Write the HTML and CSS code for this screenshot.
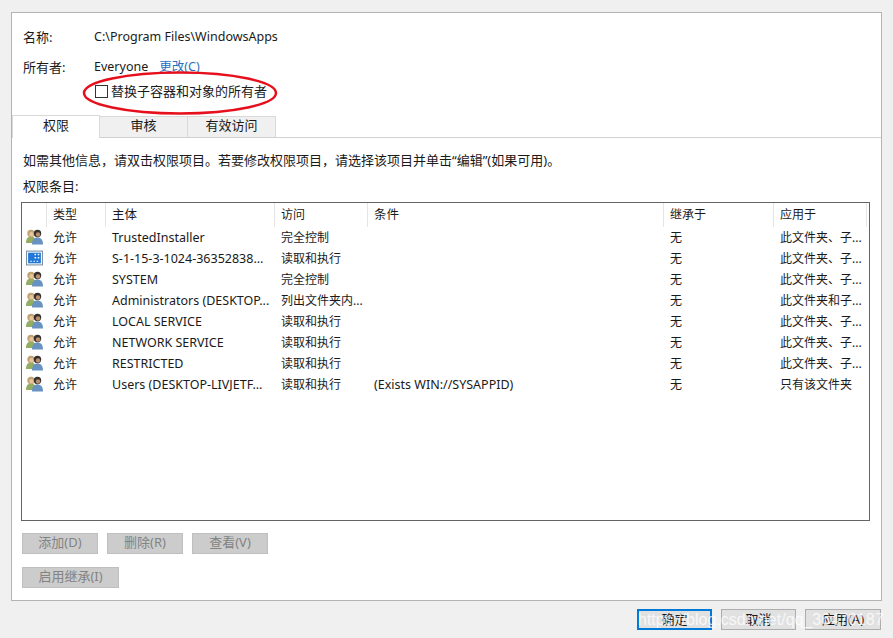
FILE: index.html
```html
<!DOCTYPE html>
<html>
<head>
  <meta charset="utf-8">
  <link rel="stylesheet" href="styles.css">
</head>
<body>
  <svg width="0" height="0" class="defs">
    <symbol id="users" viewBox="0 0 17 16">
      <path d="M0 14c0-4 1.500-6.500 5-6.500s5 2.500 5 6.500z" fill="#93ad63"/>
      <circle cx="5" cy="4.500" r="3.700" fill="#bfa26f"/>
      <circle cx="5.500" cy="5.200" r="2.200" fill="#e6c59c"/>
      <path d="M6 15.500c0-4.500 2-7 5.500-7s5.500 2.500 5.500 7z" fill="#6792c2"/>
      <circle cx="11.500" cy="4.500" r="3.700" fill="#35302e"/>
      <circle cx="12" cy="5.500" r="2.200" fill="#b98f6c"/>
    </symbol>
    <symbol id="package" viewBox="0 0 16 14">
      <rect x="0.500" y="0.500" width="15" height="13" fill="#fff" stroke="#7c8ea3"/>
      <rect x="2" y="2" width="12" height="10" fill="#1f78d8"/>
      <path d="M8 3h1.500v1.500H8zM11 3h1.500v1.500H11zM8 6h1.500v1.500H8zM11 6h1.500v1.500H11zM4 9.500h1.500v1H4zM7 9.500h1.500v1H7zM10 9.500h1.500v1H10z" fill="#fff"/>
    </symbol>
  </svg>

  <div class="panel">
    <div class="info-row name-row">
      <span class="info-label">名称:</span>
      <span>C:\Program Files\WindowsApps</span>
    </div>
    <div class="info-row owner-row">
      <span class="info-label">所有者:</span>
      <span>Everyone</span>
      <a class="change-link">更改(C)</a>
    </div>
    <label class="replace-row"><span class="checkbox"></span>替换子容器和对象的所有者</label>

    <div class="tabs">
      <div class="tab tab-active">权限</div>
      <div class="tab">审核</div>
      <div class="tab">有效访问</div>
    </div>

    <p class="hint">如需其他信息，请双击权限项目。若要修改权限项目，请选择该项目并单击“编辑”(如果可用)。</p>
    <p class="list-title">权限条目:</p>

    <div class="list">
      <div class="list-row list-head">
        <span></span>
        <span>类型</span>
        <span>主体</span>
        <span>访问</span>
        <span>条件</span>
        <span>继承于</span>
        <span>应用于</span>
      </div>
      <div class="list-row"><svg class="icon"><use href="#users"/></svg><span>允许</span><span>TrustedInstaller</span><span>完全控制</span><span></span><span>无</span><span>此文件夹、子...</span></div>
      <div class="list-row"><svg class="icon"><use href="#package"/></svg><span>允许</span><span>S-1-15-3-1024-36352838...</span><span>读取和执行</span><span></span><span>无</span><span>此文件夹、子...</span></div>
      <div class="list-row"><svg class="icon"><use href="#users"/></svg><span>允许</span><span>SYSTEM</span><span>完全控制</span><span></span><span>无</span><span>此文件夹、子...</span></div>
      <div class="list-row"><svg class="icon"><use href="#users"/></svg><span>允许</span><span>Administrators (DESKTOP...</span><span>列出文件夹内...</span><span></span><span>无</span><span>此文件夹和子...</span></div>
      <div class="list-row"><svg class="icon"><use href="#users"/></svg><span>允许</span><span>LOCAL SERVICE</span><span>读取和执行</span><span></span><span>无</span><span>此文件夹、子...</span></div>
      <div class="list-row"><svg class="icon"><use href="#users"/></svg><span>允许</span><span>NETWORK SERVICE</span><span>读取和执行</span><span></span><span>无</span><span>此文件夹、子...</span></div>
      <div class="list-row"><svg class="icon"><use href="#users"/></svg><span>允许</span><span>RESTRICTED</span><span>读取和执行</span><span></span><span>无</span><span>此文件夹、子...</span></div>
      <div class="list-row"><svg class="icon"><use href="#users"/></svg><span>允许</span><span>Users (DESKTOP-LIVJETF...</span><span>读取和执行</span><span>(Exists WIN://SYSAPPID)</span><span>无</span><span>只有该文件夹</span></div>
    </div>

    <div class="btn-row">
      <button class="btn btn-off">添加(D)</button>
      <button class="btn btn-off">删除(R)</button>
      <button class="btn btn-off">查看(V)</button>
    </div>
    <div class="btn-row inherit-row">
      <button class="btn btn-off btn-wide">启用继承(I)</button>
    </div>
  </div>

  <div class="footer">
    <button class="btn btn-main">确定</button>
    <button class="btn">取消</button>
    <button class="btn btn-apply">应用(A)</button>
  </div>

  <!-- red circle drawn over the screenshot -->
  <svg class="ring" width="200" height="46" viewBox="0 0 200 46">
    <ellipse cx="100" cy="23" rx="96" ry="20.500" fill="none" stroke="#e60f1c" stroke-width="2.500"/>
  </svg>
  <div class="watermark">https://blog.csdn.net/qq_36470187</div>
</body>
</html>
```

FILE: styles.css
```css
* {
  box-sizing: border-box;
}

html, body {
  margin: 0;
  height: 638px;
  overflow: hidden;
}

body {
  position: relative;
  padding: 12px 11px 0;
  background-color: #f0f0f0;
  color: #1a1a1a;
  font-family: "Noto Sans", "Noto Sans CJK SC", sans-serif;
  font-size: 12.500px;
  line-height: 16px;
}

.defs {
  position: absolute;
}

/* main white page */
.panel {
  height: 589px;
  padding: 0 11px;
  background-color: #fff;
  border: 1px solid #b4b4b4;
}

.info-row {
  display: flex;
}

.name-row {
  margin-top: 16px;
}

.owner-row {
  margin-top: 14px;
}

.info-label {
  width: 71px;
  font-size: 13px;
}

.change-link {
  margin-left: 11px;
  color: #2a6fc0;
}

.replace-row {
  display: flex;
  align-items: center;
  height: 16px;
  margin: 8px 0 0 72px;
  font-size: 13px;
}

.checkbox {
  width: 13px;
  height: 13px;
  margin-right: 3px;
  border: 1px solid #333;
}

.tabs {
  display: flex;
  height: 23px;
  margin: 16px -11px 0;
  border-bottom: 1px solid #d0d0d0;
}

.tab {
  width: 88px;
  height: 21px;
  margin-top: 1px;
  background-color: #f0f0f0;
  border: 1px solid #d9d9d9;
  border-bottom: none;
  border-left: none;
  text-align: center;
  font-size: 13px;
  line-height: 16px;
}

.tab-active {
  height: 23px;
  margin-top: 0;
  background-color: #fff;
  border-left: 1px solid #d9d9d9;
  line-height: 18px;
}

.hint, .list-title {
  margin: 0;
  font-size: 13px;
}

.hint {
  margin-top: 14px;
}

.list-title {
  margin-top: 10px;
}

/* permission entries */
.list {
  height: 319px;
  margin: 8px 0 0 -2px;
  width: 849px;
  border: 1px solid #646464;
}

.list-row {
  display: grid;
  grid-template-columns: 25px 59px 169px 93px 296px 110px 1fr;
  height: 21px;
  line-height: 21px;
  padding-right: 2px;
  font-size: 12px;
}

.list-row > span {
  padding-left: 6px;
  white-space: nowrap;
  overflow: hidden;
}

/* the subject and condition columns are latin text */
.list-row > :nth-child(3),
.list-row > :nth-child(5) {
  font-size: 12.500px;
}

.list-head {
  height: 24px;
  line-height: 23px;
}

.list-head > span {
  border-right: 1px solid #e5e5e5;
}

.icon {
  width: 17px;
  height: 16px;
  margin: 2px 0 0 4px;
}

/* buttons */
.btn-row {
  display: flex;
  gap: 9px;
  margin-top: 12px;
  margin-left: -1px;
}

.inherit-row {
  margin-top: 13px;
}

.btn {
  width: 75px;
  height: 21px;
  padding: 0 0 2px;
  background-color: #e1e1e1;
  border: 1px solid #adadad;
  color: #1a1a1a;
  font: inherit;
  font-size: 13px;
  line-height: 17px;
}

.btn-off {
  width: 76px;
  background-color: #ccc;
  border-color: #bfbfbf;
  color: #838383;
}

.btn-wide {
  width: 97px;
}

.btn-main {
  border: 2px solid #0078d7;
}

.btn-apply {
  width: 76px;
}

.footer {
  display: flex;
  justify-content: flex-end;
  gap: 9px;
  margin: 8px 1px 0 0;
}

.footer .btn {
  padding-bottom: 0;
}

.ring {
  position: absolute;
  left: 80px;
  top: 70px;
}

.watermark {
  position: absolute;
  left: 638px;
  top: 607px;
  color: rgba(255, 255, 255, 0.75);
  font-family: "Liberation Sans", sans-serif;
  font-size: 16px;
  line-height: 26px;
  white-space: nowrap;
}
```
